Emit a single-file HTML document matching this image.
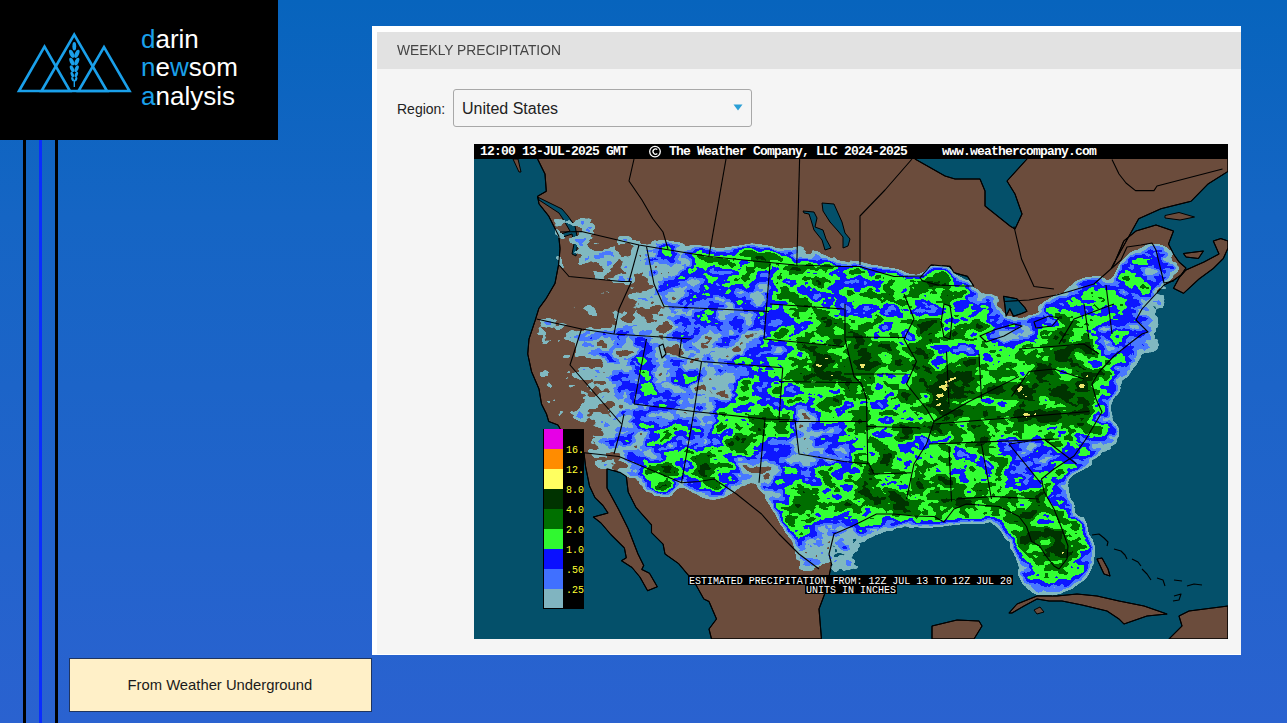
<!DOCTYPE html>
<html><head><meta charset="utf-8">
<style>
html,body{margin:0;padding:0;}
body{width:1287px;height:723px;position:relative;overflow:hidden;
background:linear-gradient(180deg,#0764bd 0%,#1565c4 30%,#2a62d0 100%);
font-family:"Liberation Sans",sans-serif;}
.abs{position:absolute;}
#logo{left:0;top:0;width:278px;height:140px;background:#000;}
.vl{position:absolute;top:140px;bottom:0;width:3px;}
#panel{left:372px;top:26px;width:869px;height:629px;background:#fff;}
#hdr{left:377px;top:32px;width:864px;height:37px;background:#e2e2e2;}
#body{left:377px;top:69px;width:864px;height:585px;background:#f5f5f5;}
#title{left:397px;top:41.4px;font-size:15px;color:#444;white-space:nowrap;transform:scaleX(0.92);transform-origin:0 0;}
#reglbl{left:397px;top:101.2px;font-size:14px;color:#222;}
#sel{left:453px;top:89px;width:297px;height:36px;border:1px solid #a8a8a8;border-radius:3px;background:#f5f5f5;}
#seltxt{left:462px;top:99.5px;font-size:16px;color:#222;}
#map{left:474px;top:144px;width:754px;height:495px;}
#note{left:69px;top:658px;width:301px;height:52px;background:#fff0c8;border:1px solid #203560;}
#notetxt{left:127.5px;top:676.6px;font-size:14.8px;color:#1a1a1a;}
.logotxt{position:absolute;left:141px;font-size:26px;color:#fff;line-height:28px;letter-spacing:0px;}
.logotxt b{font-weight:normal;color:#1aa0ea;}
</style></head><body>
<div id="logo" class="abs">
<svg width="278" height="140" viewBox="0 0 278 140">
 <g fill="none" stroke="#1aa0ea" stroke-width="2.6" stroke-linejoin="miter">
  <path d="M19 91 L44.5 46.5 L70 91 Z"/>
  <path d="M41.5 91 L74.2 34.5 L107 91 Z"/>
  <path d="M78.5 91 L104 47 L129.5 91 Z"/>
 </g>
 <g fill="#1aa0ea">
  <ellipse cx="74.3" cy="46.3" rx="1.9" ry="4.3"/>
  <ellipse cx="71.70" cy="53.8" rx="2.1" ry="4.3" transform="rotate(-24 71.70 53.8)"/>
  <ellipse cx="76.90" cy="53.8" rx="2.1" ry="4.3" transform="rotate(24 76.90 53.8)"/>
  <ellipse cx="71.80" cy="61.6" rx="2.0" ry="4.1" transform="rotate(-24 71.80 61.6)"/>
  <ellipse cx="76.80" cy="61.6" rx="2.0" ry="4.1" transform="rotate(24 76.80 61.6)"/>
  <ellipse cx="72.00" cy="68.7" rx="1.8" ry="3.6" transform="rotate(-24 72.00 68.7)"/>
  <ellipse cx="76.60" cy="68.7" rx="1.8" ry="3.6" transform="rotate(24 76.60 68.7)"/>
  <ellipse cx="72.30" cy="74.6" rx="1.5" ry="3.0" transform="rotate(-24 72.30 74.6)"/>
  <ellipse cx="76.30" cy="74.6" rx="1.5" ry="3.0" transform="rotate(24 76.30 74.6)"/>
  <ellipse cx="72.60" cy="79.2" rx="1.2" ry="2.3" transform="rotate(-24 72.60 79.2)"/>
  <ellipse cx="76.00" cy="79.2" rx="1.2" ry="2.3" transform="rotate(24 76.00 79.2)"/>
  <rect x="73.6" y="80" width="1.4" height="7"/>
 </g>
</svg>
<div class="logotxt" style="top:24.5px"><b>d</b>arin</div>
<div class="logotxt" style="top:53px"><b>n</b>e<b>w</b>som</div>
<div class="logotxt" style="top:81.5px"><b>a</b>nalysis</div>
</div>
<div class="vl" style="left:23px;background:#000"></div>
<div class="vl" style="left:39px;background:#0a2cff"></div>
<div class="vl" style="left:55px;background:#000"></div>
<div id="panel" class="abs"></div>
<div id="hdr" class="abs"></div>
<div id="body" class="abs"></div>
<div id="title" class="abs">WEEKLY PRECIPITATION</div>
<div id="reglbl" class="abs">Region:</div>
<div id="sel" class="abs"></div>
<div id="seltxt" class="abs">United States</div>
<svg class="abs" style="left:733px;top:104px" width="11" height="8"><path d="M0.5 0.5 L9.5 0.5 L5 6.5 Z" fill="#2a9fd6"/></svg>
<svg id="map" class="abs" width="754" height="495" viewBox="0 0 754 495">
<rect x="0" y="0" width="754" height="495" fill="#04506a"/>
<path d="M62,0 L63.6,15 L71,30 L72.3,47.3 L63.6,52.3 L65,59.8 L74.8,72.2 L79.8,82.2 L84.8,92.1 L86,104.6 L84.8,119.5 L81,139.4 L72.3,154.3 L64.9,164.3 L61.1,176.7 L55,195 L53.75,210 L57.5,227.5 L65,245 L67.5,260 L72.5,270 L74.7,277.4 L84,281 L95,300 L110,309 L111.6,322.7 L115.5,342 L121,353.7 L129,361.5 L134,369 L119.4,373 L127,379 L136.8,390.5 L150.4,404 L152.3,413.8 L147.5,416.7 L158,423.5 L165.9,433 L173.6,446.7 L183.3,442.8 L175.5,429.3 L167.8,425.4 L169.7,421.5 L164,410 L154.2,384.7 L144.6,365.4 L133,344 L133,324.7 L146.5,328.6 L152.3,332.4 L154.2,348 L162,363.4 L177.5,380.9 L177.5,388.6 L189.1,400.2 L191,410 L204.6,419.6 L214.3,431.2 L222,441 L229.8,455 L235,457.5 L242.5,475 L235,485 L237.5,495 L347.5,495 L345,465 L352.5,445 L357.5,420 L355,410 L360,390 L377.5,382.5 L402.5,370 L420,370 L440,372 L460,372.5 L470,378 L480,365 L492.5,360 L525,362.5 L545,372.5 L552.5,382.5 L557.5,397.5 L565.5,402 L572,412 L580,422 L585,425 L593,415 L594,402 L588,385 L580,365 L570,347.5 L567.5,335 L580,325 L600,312 L612,295 L628,268 L622,255 L618,240 L625,228 L640,212 L655,200 L668,190 L674,188 L668,182 L662,176 L668,165 L680,152 L690,141 L700,136 L707,131 L712,124 L705,118 L699.5,110 L694.5,100 L699.5,87 L682,81 L662,87 L649.8,97 L640,120 L637.3,124.5 L639.8,119.5 L664.7,74.7 L687,64.7 L717,57.3 L734,40 L754,27.4 L754,0 L553,0 L553,15 L533,37 L541,50 L548,70 L541,85 L536,82 L521,70 L511,62 L511,47 L506,35 L481,35 L471,32 L441,15 L441,0 Z" fill="#6b4c3c" stroke="#000" stroke-width="1"/>
<path d="M699.5,144.3 L709.5,149.3 L725,135 L739.3,124.5 L749.3,114.5 L754,104 L754,97 L746.8,94.6 L739.3,97 L745,110 L730,118 L712,126 L705,134 Z" fill="#6b4c3c" stroke="#000" stroke-width="1"/>
<path d="M709.5,109.5 L729.4,107 L724.4,114.5 L712,113 Z" fill="#6b4c3c" stroke="#000" stroke-width="1"/>
<path d="M691,71.5 L705,68.5 L720.5,73 L706,76 L691,74 Z" fill="#6b4c3c" stroke="#000" stroke-width="1"/>
<path d="M535,469 L543,460 L563,452 L583,452 L603,450 L623,452 L645,457 L670,462 L693,470 L673,472 L650,480 L645,475 L633,467 L608,461 L588,457 L575,457 L563,455 L550,462 L538,469 Z" fill="#6b4c3c" stroke="#000" stroke-width="1"/>
<path d="M560,466 L566,463 L570,468 L563,470 Z" fill="#6b4c3c" stroke="#000" stroke-width="1"/>
<path d="M705,472 L715,467 L754,462 L754,495 L695,495 L708,482 Z" fill="#6b4c3c" stroke="#000" stroke-width="1"/>
<path d="M458,495 L458,482 L483,476 L505,477 L508,482 L500,495 Z" fill="#6b4c3c" stroke="#000" stroke-width="1"/>
<path d="M623,415 L628,414 L634,425 L636,432 L630,430 Z" fill="#6b4c3c" stroke="#000" stroke-width="1"/>
<path d="M39,15 L44,15 L47,28 L45,28 Z" fill="#6b4c3c" stroke="#000" stroke-width="1"/>
<path d="M63.6,53 L88,65 L94,72 L101,82 L104,97 L102,112 L98,110 L100,100 L98,90 L86,94 L84,91 L96,87 L89,75 L85,69 L65,56 Z" fill="#04506a" stroke="#000" stroke-width="1"/>
<path d="M348,59 L360,60 L368,78 L371,89 L376,95 L374,102 L369,104 L369,93 L364,87 L356,78 L349,67 Z" fill="#04506a" stroke="#000" stroke-width="1"/>
<path d="M329,67 L340,68 L343,74 L341,83 L349,86 L352,95 L357,104 L351,106 L348,96 L340,86 L337,76 L335,70 L330,69 Z" fill="#04506a" stroke="#000" stroke-width="1"/>
<path d="M446,133.6 L457,121 L476,122.4 L480,128.7 L493.5,132.4 L499.7,142 L488,142 L463.6,141 L448.6,137 Z" fill="#04506a" stroke="#000" stroke-width="1"/>
<path d="M470,160 L476,162 L478,175 L476,195 L470,193 L467,178 Z" fill="#04506a" stroke="#000" stroke-width="1"/>
<path d="M529.6,152.3 L543,154.8 L550.8,163.5 L553,167.3 L547,169.8 L539.5,172.2 L535.8,164.8 L532,172.2 L530.8,161 Z" fill="#04506a" stroke="#000" stroke-width="1"/>
<path d="M506,192 L520,186 L540,180 L548,182 L530,192 L512,198 Z" fill="#04506a" stroke="#000" stroke-width="1"/>
<path d="M560,178 L575,172 L585,174 L578,182 L562,184 Z" fill="#04506a" stroke="#000" stroke-width="1"/>
<defs>
<filter id="pf" x="0" y="0" width="754" height="495" filterUnits="userSpaceOnUse" color-interpolation-filters="sRGB">
  <feColorMatrix in="SourceGraphic" type="matrix" values="1 0 0 0 0  1 0 0 0 0  1 0 0 0 0  0 0 0 0 1" result="r0"/>
  <feGaussianBlur in="r0" stdDeviation="7" result="base0"/>
  <feColorMatrix in="SourceGraphic" type="matrix" values="0 1 0 0 0  0 1 0 0 0  0 1 0 0 0  0 0 0 0 1" result="g0"/>
  <feGaussianBlur in="g0" stdDeviation="5" result="env1"/>
  <feComponentTransfer in="env1" result="env"><feFuncR type="linear" slope="1.55" intercept="-0.55"/><feFuncG type="linear" slope="1.55" intercept="-0.55"/><feFuncB type="linear" slope="1.55" intercept="-0.55"/></feComponentTransfer>
  <feComposite in="base0" in2="env" operator="arithmetic" k1="1" k2="0" k3="0" k4="0" result="base"/>
  <feTurbulence type="fractalNoise" baseFrequency="0.05 0.075" numOctaves="3" seed="7" result="noise"/>
  <feColorMatrix in="noise" type="matrix" values="1 0 0 0 0  1 0 0 0 0  1 0 0 0 0  0 0 0 0 1" result="gn0"/>
  <feComposite in="gn0" in2="env" operator="arithmetic" k1="1" k2="0" k3="-0.5" k4="0.5" result="gn"/>
  <feComposite in="base" in2="gn" operator="arithmetic" k1="0" k2="1" k3="0.8" k4="-0.4" result="sum"/>
  <feComponentTransfer in="sum" result="col">
    <feFuncR type="discrete" tableValues="0.000 0.000 0.000 0.000 0.000 0.502 0.502 0.502 0.502 0.502 0.502 0.290 0.290 0.290 0.290 0.051 0.051 0.051 0.051 0.051 0.200 0.200 0.200 0.200 0.200 0.000 0.000 0.000 0.000 0.000 0.000 0.000 0.000 0.000 0.000 0.000 0.000 0.000 0.941 0.941"/>
    <feFuncG type="discrete" tableValues="0.000 0.000 0.000 0.000 0.000 0.722 0.722 0.722 0.722 0.722 0.722 0.471 0.471 0.471 0.471 0.094 0.094 0.094 0.094 0.094 1.000 1.000 1.000 1.000 1.000 0.435 0.435 0.435 0.435 0.435 0.435 0.200 0.200 0.200 0.200 0.200 0.200 0.200 0.902 0.902"/>
    <feFuncB type="discrete" tableValues="0.000 0.000 0.000 0.000 0.000 0.753 0.753 0.753 0.753 0.753 0.753 1.000 1.000 1.000 1.000 1.000 1.000 1.000 1.000 1.000 0.200 0.200 0.200 0.200 0.200 0.000 0.000 0.000 0.000 0.000 0.000 0.000 0.000 0.000 0.000 0.000 0.000 0.000 0.431 0.431"/>
  </feComponentTransfer>
  <feColorMatrix in="sum" type="matrix" values="0 0 0 0 0  0 0 0 0 0  0 0 0 0 0  100 0 0 0 -12.5" result="mask"/>
  <feComposite in="col" in2="mask" operator="in"/>
</filter>
</defs>
<g filter="url(#pf)">
<rect x="0" y="0" width="754" height="495" fill="#000"/>
<rect x="60" y="35" width="20" height="20" fill="rgb(13,0,0)"/><rect x="80" y="35" width="20" height="20" fill="rgb(46,0,0)"/><rect x="100" y="35" width="20" height="20" fill="rgb(46,0,0)"/><rect x="120" y="35" width="20" height="20" fill="rgb(46,0,0)"/><rect x="60" y="55" width="20" height="20" fill="rgb(46,0,0)"/><rect x="80" y="55" width="20" height="20" fill="rgb(13,0,0)"/><rect x="100" y="55" width="20" height="20" fill="rgb(46,0,0)"/><rect x="120" y="55" width="20" height="20" fill="rgb(46,0,0)"/><rect x="140" y="55" width="20" height="20" fill="rgb(46,0,0)"/><rect x="160" y="55" width="20" height="20" fill="rgb(46,0,0)"/><rect x="180" y="55" width="20" height="20" fill="rgb(46,0,0)"/><rect x="60" y="75" width="20" height="20" fill="rgb(13,0,0)"/><rect x="80" y="75" width="20" height="20" fill="rgb(46,0,0)"/><rect x="100" y="75" width="20" height="20" fill="rgb(46,0,0)"/><rect x="120" y="75" width="20" height="20" fill="rgb(13,0,0)"/><rect x="140" y="75" width="20" height="20" fill="rgb(46,0,0)"/><rect x="160" y="75" width="20" height="20" fill="rgb(46,0,0)"/><rect x="180" y="75" width="20" height="20" fill="rgb(71,0,0)"/><rect x="200" y="75" width="20" height="20" fill="rgb(102,0,0)"/><rect x="220" y="75" width="20" height="20" fill="rgb(102,0,0)"/><rect x="240" y="75" width="20" height="20" fill="rgb(133,0,0)"/><rect x="260" y="75" width="20" height="20" fill="rgb(166,0,0)"/><rect x="280" y="75" width="20" height="20" fill="rgb(166,0,0)"/><rect x="300" y="75" width="20" height="20" fill="rgb(133,0,0)"/><rect x="320" y="75" width="20" height="20" fill="rgb(71,0,0)"/><rect x="340" y="75" width="20" height="20" fill="rgb(46,0,0)"/><rect x="360" y="75" width="20" height="20" fill="rgb(46,0,0)"/><rect x="380" y="75" width="20" height="20" fill="rgb(13,0,0)"/><rect x="620" y="75" width="20" height="20" fill="rgb(46,0,0)"/><rect x="640" y="75" width="20" height="20" fill="rgb(102,0,0)"/><rect x="660" y="75" width="20" height="20" fill="rgb(71,0,0)"/><rect x="680" y="75" width="20" height="20" fill="rgb(102,0,0)"/><rect x="700" y="75" width="20" height="20" fill="rgb(71,0,0)"/><rect x="60" y="95" width="20" height="20" fill="rgb(46,0,0)"/><rect x="80" y="95" width="20" height="20" fill="rgb(13,0,0)"/><rect x="100" y="95" width="20" height="20" fill="rgb(13,0,0)"/><rect x="120" y="95" width="20" height="20" fill="rgb(46,0,0)"/><rect x="140" y="95" width="20" height="20" fill="rgb(46,0,0)"/><rect x="160" y="95" width="20" height="20" fill="rgb(46,0,0)"/><rect x="180" y="95" width="20" height="20" fill="rgb(102,0,0)"/><rect x="200" y="95" width="20" height="20" fill="rgb(102,0,0)"/><rect x="220" y="95" width="20" height="20" fill="rgb(102,0,0)"/><rect x="240" y="95" width="20" height="20" fill="rgb(133,0,0)"/><rect x="260" y="95" width="20" height="20" fill="rgb(166,0,0)"/><rect x="280" y="95" width="20" height="20" fill="rgb(166,0,0)"/><rect x="300" y="95" width="20" height="20" fill="rgb(133,0,0)"/><rect x="320" y="95" width="20" height="20" fill="rgb(71,0,0)"/><rect x="340" y="95" width="20" height="20" fill="rgb(46,0,0)"/><rect x="360" y="95" width="20" height="20" fill="rgb(13,0,0)"/><rect x="380" y="95" width="20" height="20" fill="rgb(102,0,0)"/><rect x="400" y="95" width="20" height="20" fill="rgb(133,0,0)"/><rect x="420" y="95" width="20" height="20" fill="rgb(166,0,0)"/><rect x="440" y="95" width="20" height="20" fill="rgb(166,0,0)"/><rect x="460" y="95" width="20" height="20" fill="rgb(102,0,0)"/><rect x="480" y="95" width="20" height="20" fill="rgb(102,0,0)"/><rect x="500" y="95" width="20" height="20" fill="rgb(13,0,0)"/><rect x="620" y="95" width="20" height="20" fill="rgb(102,0,0)"/><rect x="640" y="95" width="20" height="20" fill="rgb(46,0,0)"/><rect x="660" y="95" width="20" height="20" fill="rgb(133,0,0)"/><rect x="680" y="95" width="20" height="20" fill="rgb(71,0,0)"/><rect x="700" y="95" width="20" height="20" fill="rgb(71,0,0)"/><rect x="720" y="95" width="20" height="20" fill="rgb(46,0,0)"/><rect x="60" y="115" width="20" height="20" fill="rgb(13,0,0)"/><rect x="100" y="115" width="20" height="20" fill="rgb(13,0,0)"/><rect x="120" y="115" width="20" height="20" fill="rgb(46,0,0)"/><rect x="140" y="115" width="20" height="20" fill="rgb(46,0,0)"/><rect x="160" y="115" width="20" height="20" fill="rgb(71,0,0)"/><rect x="180" y="115" width="20" height="20" fill="rgb(71,0,0)"/><rect x="200" y="115" width="20" height="20" fill="rgb(102,0,0)"/><rect x="220" y="115" width="20" height="20" fill="rgb(133,0,0)"/><rect x="240" y="115" width="20" height="20" fill="rgb(166,0,0)"/><rect x="260" y="115" width="20" height="20" fill="rgb(166,0,0)"/><rect x="280" y="115" width="20" height="20" fill="rgb(133,0,0)"/><rect x="300" y="115" width="20" height="20" fill="rgb(166,0,0)"/><rect x="320" y="115" width="20" height="20" fill="rgb(166,0,0)"/><rect x="340" y="115" width="20" height="20" fill="rgb(166,0,0)"/><rect x="360" y="115" width="20" height="20" fill="rgb(133,0,0)"/><rect x="380" y="115" width="20" height="20" fill="rgb(133,0,0)"/><rect x="400" y="115" width="20" height="20" fill="rgb(133,0,0)"/><rect x="420" y="115" width="20" height="20" fill="rgb(166,0,0)"/><rect x="440" y="115" width="20" height="20" fill="rgb(166,0,0)"/><rect x="460" y="115" width="20" height="20" fill="rgb(166,0,0)"/><rect x="480" y="115" width="20" height="20" fill="rgb(13,0,0)"/><rect x="500" y="115" width="20" height="20" fill="rgb(46,0,0)"/><rect x="520" y="115" width="20" height="20" fill="rgb(46,0,0)"/><rect x="540" y="115" width="20" height="20" fill="rgb(13,0,0)"/><rect x="580" y="115" width="20" height="20" fill="rgb(133,0,0)"/><rect x="600" y="115" width="20" height="20" fill="rgb(133,0,0)"/><rect x="620" y="115" width="20" height="20" fill="rgb(133,0,0)"/><rect x="640" y="115" width="20" height="20" fill="rgb(166,0,0)"/><rect x="660" y="115" width="20" height="20" fill="rgb(133,0,0)"/><rect x="680" y="115" width="20" height="20" fill="rgb(71,0,0)"/><rect x="700" y="115" width="20" height="20" fill="rgb(46,0,0)"/><rect x="720" y="115" width="20" height="20" fill="rgb(46,0,0)"/><rect x="140" y="135" width="20" height="20" fill="rgb(13,0,0)"/><rect x="160" y="135" width="20" height="20" fill="rgb(46,0,0)"/><rect x="180" y="135" width="20" height="20" fill="rgb(71,0,0)"/><rect x="200" y="135" width="20" height="20" fill="rgb(71,0,0)"/><rect x="220" y="135" width="20" height="20" fill="rgb(102,0,0)"/><rect x="240" y="135" width="20" height="20" fill="rgb(102,0,0)"/><rect x="260" y="135" width="20" height="20" fill="rgb(102,0,0)"/><rect x="280" y="135" width="20" height="20" fill="rgb(102,0,0)"/><rect x="300" y="135" width="20" height="20" fill="rgb(133,0,0)"/><rect x="320" y="135" width="20" height="20" fill="rgb(133,0,0)"/><rect x="340" y="135" width="20" height="20" fill="rgb(102,0,0)"/><rect x="360" y="135" width="20" height="20" fill="rgb(133,0,0)"/><rect x="380" y="135" width="20" height="20" fill="rgb(133,0,0)"/><rect x="400" y="135" width="20" height="20" fill="rgb(166,0,0)"/><rect x="420" y="135" width="20" height="20" fill="rgb(166,0,0)"/><rect x="440" y="135" width="20" height="20" fill="rgb(166,0,0)"/><rect x="460" y="135" width="20" height="20" fill="rgb(166,0,0)"/><rect x="480" y="135" width="20" height="20" fill="rgb(133,0,0)"/><rect x="500" y="135" width="20" height="20" fill="rgb(46,0,0)"/><rect x="520" y="135" width="20" height="20" fill="rgb(13,0,0)"/><rect x="540" y="135" width="20" height="20" fill="rgb(46,0,0)"/><rect x="560" y="135" width="20" height="20" fill="rgb(102,0,0)"/><rect x="600" y="135" width="20" height="20" fill="rgb(133,0,0)"/><rect x="620" y="135" width="20" height="20" fill="rgb(133,0,0)"/><rect x="640" y="135" width="20" height="20" fill="rgb(133,0,0)"/><rect x="660" y="135" width="20" height="20" fill="rgb(102,0,0)"/><rect x="680" y="135" width="20" height="20" fill="rgb(46,0,0)"/><rect x="700" y="135" width="20" height="20" fill="rgb(13,0,0)"/><rect x="720" y="135" width="20" height="20" fill="rgb(46,0,0)"/><rect x="160" y="155" width="20" height="20" fill="rgb(13,0,0)"/><rect x="180" y="155" width="20" height="20" fill="rgb(46,0,0)"/><rect x="200" y="155" width="20" height="20" fill="rgb(102,0,0)"/><rect x="220" y="155" width="20" height="20" fill="rgb(102,0,0)"/><rect x="240" y="155" width="20" height="20" fill="rgb(102,0,0)"/><rect x="260" y="155" width="20" height="20" fill="rgb(71,0,0)"/><rect x="280" y="155" width="20" height="20" fill="rgb(71,0,0)"/><rect x="300" y="155" width="20" height="20" fill="rgb(166,0,0)"/><rect x="320" y="155" width="20" height="20" fill="rgb(166,0,0)"/><rect x="340" y="155" width="20" height="20" fill="rgb(133,0,0)"/><rect x="360" y="155" width="20" height="20" fill="rgb(133,0,0)"/><rect x="380" y="155" width="20" height="20" fill="rgb(133,0,0)"/><rect x="400" y="155" width="20" height="20" fill="rgb(133,0,0)"/><rect x="420" y="155" width="20" height="20" fill="rgb(133,0,0)"/><rect x="440" y="155" width="20" height="20" fill="rgb(133,0,0)"/><rect x="460" y="155" width="20" height="20" fill="rgb(102,0,0)"/><rect x="480" y="155" width="20" height="20" fill="rgb(133,0,0)"/><rect x="500" y="155" width="20" height="20" fill="rgb(102,0,0)"/><rect x="520" y="155" width="20" height="20" fill="rgb(71,0,0)"/><rect x="540" y="155" width="20" height="20" fill="rgb(46,0,0)"/><rect x="560" y="155" width="20" height="20" fill="rgb(102,0,0)"/><rect x="580" y="155" width="20" height="20" fill="rgb(166,0,0)"/><rect x="600" y="155" width="20" height="20" fill="rgb(166,0,0)"/><rect x="620" y="155" width="20" height="20" fill="rgb(133,0,0)"/><rect x="640" y="155" width="20" height="20" fill="rgb(133,0,0)"/><rect x="660" y="155" width="20" height="20" fill="rgb(71,0,0)"/><rect x="680" y="155" width="20" height="20" fill="rgb(46,0,0)"/><rect x="700" y="155" width="20" height="20" fill="rgb(46,0,0)"/><rect x="720" y="155" width="20" height="20" fill="rgb(13,0,0)"/><rect x="80" y="175" width="20" height="20" fill="rgb(13,0,0)"/><rect x="100" y="175" width="20" height="20" fill="rgb(46,0,0)"/><rect x="120" y="175" width="20" height="20" fill="rgb(71,0,0)"/><rect x="140" y="175" width="20" height="20" fill="rgb(71,0,0)"/><rect x="160" y="175" width="20" height="20" fill="rgb(71,0,0)"/><rect x="180" y="175" width="20" height="20" fill="rgb(46,0,0)"/><rect x="200" y="175" width="20" height="20" fill="rgb(102,0,0)"/><rect x="220" y="175" width="20" height="20" fill="rgb(71,0,0)"/><rect x="240" y="175" width="20" height="20" fill="rgb(102,0,0)"/><rect x="260" y="175" width="20" height="20" fill="rgb(71,0,0)"/><rect x="280" y="175" width="20" height="20" fill="rgb(102,0,0)"/><rect x="300" y="175" width="20" height="20" fill="rgb(133,0,0)"/><rect x="320" y="175" width="20" height="20" fill="rgb(133,0,0)"/><rect x="340" y="175" width="20" height="20" fill="rgb(166,0,0)"/><rect x="360" y="175" width="20" height="20" fill="rgb(166,0,0)"/><rect x="380" y="175" width="20" height="20" fill="rgb(166,0,0)"/><rect x="400" y="175" width="20" height="20" fill="rgb(133,0,0)"/><rect x="420" y="175" width="20" height="20" fill="rgb(133,0,0)"/><rect x="440" y="175" width="20" height="20" fill="rgb(166,0,0)"/><rect x="460" y="175" width="20" height="20" fill="rgb(194,0,0)"/><rect x="480" y="175" width="20" height="20" fill="rgb(166,0,0)"/><rect x="500" y="175" width="20" height="20" fill="rgb(133,0,0)"/><rect x="520" y="175" width="20" height="20" fill="rgb(102,0,0)"/><rect x="540" y="175" width="20" height="20" fill="rgb(71,0,0)"/><rect x="560" y="175" width="20" height="20" fill="rgb(133,0,0)"/><rect x="580" y="175" width="20" height="20" fill="rgb(166,0,0)"/><rect x="600" y="175" width="20" height="20" fill="rgb(133,0,0)"/><rect x="620" y="175" width="20" height="20" fill="rgb(102,0,0)"/><rect x="640" y="175" width="20" height="20" fill="rgb(102,0,0)"/><rect x="660" y="175" width="20" height="20" fill="rgb(71,0,0)"/><rect x="680" y="175" width="20" height="20" fill="rgb(46,0,0)"/><rect x="700" y="175" width="20" height="20" fill="rgb(46,0,0)"/><rect x="100" y="195" width="20" height="20" fill="rgb(46,0,0)"/><rect x="120" y="195" width="20" height="20" fill="rgb(71,0,0)"/><rect x="140" y="195" width="20" height="20" fill="rgb(71,0,0)"/><rect x="160" y="195" width="20" height="20" fill="rgb(102,0,0)"/><rect x="180" y="195" width="20" height="20" fill="rgb(46,0,0)"/><rect x="200" y="195" width="20" height="20" fill="rgb(46,0,0)"/><rect x="220" y="195" width="20" height="20" fill="rgb(71,0,0)"/><rect x="240" y="195" width="20" height="20" fill="rgb(71,0,0)"/><rect x="260" y="195" width="20" height="20" fill="rgb(71,0,0)"/><rect x="280" y="195" width="20" height="20" fill="rgb(102,0,0)"/><rect x="300" y="195" width="20" height="20" fill="rgb(133,0,0)"/><rect x="320" y="195" width="20" height="20" fill="rgb(166,0,0)"/><rect x="340" y="195" width="20" height="20" fill="rgb(194,0,0)"/><rect x="360" y="195" width="20" height="20" fill="rgb(194,0,0)"/><rect x="380" y="195" width="20" height="20" fill="rgb(166,0,0)"/><rect x="400" y="195" width="20" height="20" fill="rgb(194,0,0)"/><rect x="420" y="195" width="20" height="20" fill="rgb(166,0,0)"/><rect x="440" y="195" width="20" height="20" fill="rgb(166,0,0)"/><rect x="460" y="195" width="20" height="20" fill="rgb(133,0,0)"/><rect x="480" y="195" width="20" height="20" fill="rgb(133,0,0)"/><rect x="500" y="195" width="20" height="20" fill="rgb(133,0,0)"/><rect x="520" y="195" width="20" height="20" fill="rgb(133,0,0)"/><rect x="540" y="195" width="20" height="20" fill="rgb(133,0,0)"/><rect x="560" y="195" width="20" height="20" fill="rgb(194,0,0)"/><rect x="580" y="195" width="20" height="20" fill="rgb(166,0,0)"/><rect x="600" y="195" width="20" height="20" fill="rgb(194,0,0)"/><rect x="620" y="195" width="20" height="20" fill="rgb(133,0,0)"/><rect x="640" y="195" width="20" height="20" fill="rgb(102,0,0)"/><rect x="660" y="195" width="20" height="20" fill="rgb(71,0,0)"/><rect x="680" y="195" width="20" height="20" fill="rgb(13,0,0)"/><rect x="700" y="195" width="20" height="20" fill="rgb(46,0,0)"/><rect x="100" y="215" width="20" height="20" fill="rgb(46,0,0)"/><rect x="120" y="215" width="20" height="20" fill="rgb(71,0,0)"/><rect x="140" y="215" width="20" height="20" fill="rgb(71,0,0)"/><rect x="160" y="215" width="20" height="20" fill="rgb(102,0,0)"/><rect x="180" y="215" width="20" height="20" fill="rgb(71,0,0)"/><rect x="200" y="215" width="20" height="20" fill="rgb(102,0,0)"/><rect x="220" y="215" width="20" height="20" fill="rgb(71,0,0)"/><rect x="240" y="215" width="20" height="20" fill="rgb(46,0,0)"/><rect x="260" y="215" width="20" height="20" fill="rgb(133,0,0)"/><rect x="280" y="215" width="20" height="20" fill="rgb(133,0,0)"/><rect x="300" y="215" width="20" height="20" fill="rgb(133,0,0)"/><rect x="320" y="215" width="20" height="20" fill="rgb(194,0,0)"/><rect x="340" y="215" width="20" height="20" fill="rgb(194,0,0)"/><rect x="360" y="215" width="20" height="20" fill="rgb(166,0,0)"/><rect x="380" y="215" width="20" height="20" fill="rgb(194,0,0)"/><rect x="400" y="215" width="20" height="20" fill="rgb(166,0,0)"/><rect x="420" y="215" width="20" height="20" fill="rgb(166,0,0)"/><rect x="440" y="215" width="20" height="20" fill="rgb(166,0,0)"/><rect x="460" y="215" width="20" height="20" fill="rgb(166,0,0)"/><rect x="480" y="215" width="20" height="20" fill="rgb(194,0,0)"/><rect x="500" y="215" width="20" height="20" fill="rgb(166,0,0)"/><rect x="520" y="215" width="20" height="20" fill="rgb(166,0,0)"/><rect x="540" y="215" width="20" height="20" fill="rgb(166,0,0)"/><rect x="560" y="215" width="20" height="20" fill="rgb(194,0,0)"/><rect x="580" y="215" width="20" height="20" fill="rgb(166,0,0)"/><rect x="600" y="215" width="20" height="20" fill="rgb(194,0,0)"/><rect x="620" y="215" width="20" height="20" fill="rgb(133,0,0)"/><rect x="640" y="215" width="20" height="20" fill="rgb(102,0,0)"/><rect x="660" y="215" width="20" height="20" fill="rgb(46,0,0)"/><rect x="680" y="215" width="20" height="20" fill="rgb(46,0,0)"/><rect x="700" y="215" width="20" height="20" fill="rgb(13,0,0)"/><rect x="100" y="235" width="20" height="20" fill="rgb(13,0,0)"/><rect x="120" y="235" width="20" height="20" fill="rgb(46,0,0)"/><rect x="140" y="235" width="20" height="20" fill="rgb(102,0,0)"/><rect x="160" y="235" width="20" height="20" fill="rgb(102,0,0)"/><rect x="180" y="235" width="20" height="20" fill="rgb(102,0,0)"/><rect x="200" y="235" width="20" height="20" fill="rgb(102,0,0)"/><rect x="220" y="235" width="20" height="20" fill="rgb(71,0,0)"/><rect x="240" y="235" width="20" height="20" fill="rgb(46,0,0)"/><rect x="260" y="235" width="20" height="20" fill="rgb(133,0,0)"/><rect x="280" y="235" width="20" height="20" fill="rgb(133,0,0)"/><rect x="300" y="235" width="20" height="20" fill="rgb(133,0,0)"/><rect x="320" y="235" width="20" height="20" fill="rgb(133,0,0)"/><rect x="340" y="235" width="20" height="20" fill="rgb(166,0,0)"/><rect x="360" y="235" width="20" height="20" fill="rgb(194,0,0)"/><rect x="380" y="235" width="20" height="20" fill="rgb(166,0,0)"/><rect x="400" y="235" width="20" height="20" fill="rgb(133,0,0)"/><rect x="420" y="235" width="20" height="20" fill="rgb(166,0,0)"/><rect x="440" y="235" width="20" height="20" fill="rgb(194,0,0)"/><rect x="460" y="235" width="20" height="20" fill="rgb(219,0,0)"/><rect x="480" y="235" width="20" height="20" fill="rgb(194,0,0)"/><rect x="500" y="235" width="20" height="20" fill="rgb(166,0,0)"/><rect x="520" y="235" width="20" height="20" fill="rgb(166,0,0)"/><rect x="540" y="235" width="20" height="20" fill="rgb(194,0,0)"/><rect x="560" y="235" width="20" height="20" fill="rgb(194,0,0)"/><rect x="580" y="235" width="20" height="20" fill="rgb(194,0,0)"/><rect x="600" y="235" width="20" height="20" fill="rgb(194,0,0)"/><rect x="620" y="235" width="20" height="20" fill="rgb(133,0,0)"/><rect x="640" y="235" width="20" height="20" fill="rgb(71,0,0)"/><rect x="660" y="235" width="20" height="20" fill="rgb(71,0,0)"/><rect x="680" y="235" width="20" height="20" fill="rgb(46,0,0)"/><rect x="100" y="255" width="20" height="20" fill="rgb(13,0,0)"/><rect x="120" y="255" width="20" height="20" fill="rgb(46,0,0)"/><rect x="140" y="255" width="20" height="20" fill="rgb(71,0,0)"/><rect x="160" y="255" width="20" height="20" fill="rgb(102,0,0)"/><rect x="180" y="255" width="20" height="20" fill="rgb(102,0,0)"/><rect x="200" y="255" width="20" height="20" fill="rgb(46,0,0)"/><rect x="220" y="255" width="20" height="20" fill="rgb(71,0,0)"/><rect x="240" y="255" width="20" height="20" fill="rgb(102,0,0)"/><rect x="260" y="255" width="20" height="20" fill="rgb(133,0,0)"/><rect x="280" y="255" width="20" height="20" fill="rgb(133,0,0)"/><rect x="300" y="255" width="20" height="20" fill="rgb(133,0,0)"/><rect x="320" y="255" width="20" height="20" fill="rgb(102,0,0)"/><rect x="340" y="255" width="20" height="20" fill="rgb(133,0,0)"/><rect x="360" y="255" width="20" height="20" fill="rgb(166,0,0)"/><rect x="380" y="255" width="20" height="20" fill="rgb(166,0,0)"/><rect x="400" y="255" width="20" height="20" fill="rgb(133,0,0)"/><rect x="420" y="255" width="20" height="20" fill="rgb(166,0,0)"/><rect x="440" y="255" width="20" height="20" fill="rgb(166,0,0)"/><rect x="460" y="255" width="20" height="20" fill="rgb(219,0,0)"/><rect x="480" y="255" width="20" height="20" fill="rgb(194,0,0)"/><rect x="500" y="255" width="20" height="20" fill="rgb(194,0,0)"/><rect x="520" y="255" width="20" height="20" fill="rgb(166,0,0)"/><rect x="540" y="255" width="20" height="20" fill="rgb(194,0,0)"/><rect x="560" y="255" width="20" height="20" fill="rgb(194,0,0)"/><rect x="580" y="255" width="20" height="20" fill="rgb(194,0,0)"/><rect x="600" y="255" width="20" height="20" fill="rgb(194,0,0)"/><rect x="620" y="255" width="20" height="20" fill="rgb(133,0,0)"/><rect x="640" y="255" width="20" height="20" fill="rgb(71,0,0)"/><rect x="660" y="255" width="20" height="20" fill="rgb(71,0,0)"/><rect x="60" y="275" width="20" height="20" fill="rgb(46,0,0)"/><rect x="80" y="275" width="20" height="20" fill="rgb(46,0,0)"/><rect x="100" y="275" width="20" height="20" fill="rgb(13,0,0)"/><rect x="120" y="275" width="20" height="20" fill="rgb(46,0,0)"/><rect x="140" y="275" width="20" height="20" fill="rgb(71,0,0)"/><rect x="160" y="275" width="20" height="20" fill="rgb(102,0,0)"/><rect x="180" y="275" width="20" height="20" fill="rgb(133,0,0)"/><rect x="200" y="275" width="20" height="20" fill="rgb(133,0,0)"/><rect x="220" y="275" width="20" height="20" fill="rgb(46,0,0)"/><rect x="240" y="275" width="20" height="20" fill="rgb(133,0,0)"/><rect x="260" y="275" width="20" height="20" fill="rgb(194,0,0)"/><rect x="280" y="275" width="20" height="20" fill="rgb(166,0,0)"/><rect x="300" y="275" width="20" height="20" fill="rgb(133,0,0)"/><rect x="320" y="275" width="20" height="20" fill="rgb(71,0,0)"/><rect x="340" y="275" width="20" height="20" fill="rgb(102,0,0)"/><rect x="360" y="275" width="20" height="20" fill="rgb(133,0,0)"/><rect x="380" y="275" width="20" height="20" fill="rgb(166,0,0)"/><rect x="400" y="275" width="20" height="20" fill="rgb(133,0,0)"/><rect x="420" y="275" width="20" height="20" fill="rgb(166,0,0)"/><rect x="440" y="275" width="20" height="20" fill="rgb(166,0,0)"/><rect x="460" y="275" width="20" height="20" fill="rgb(166,0,0)"/><rect x="480" y="275" width="20" height="20" fill="rgb(166,0,0)"/><rect x="500" y="275" width="20" height="20" fill="rgb(166,0,0)"/><rect x="520" y="275" width="20" height="20" fill="rgb(166,0,0)"/><rect x="540" y="275" width="20" height="20" fill="rgb(133,0,0)"/><rect x="560" y="275" width="20" height="20" fill="rgb(194,0,0)"/><rect x="580" y="275" width="20" height="20" fill="rgb(166,0,0)"/><rect x="600" y="275" width="20" height="20" fill="rgb(166,0,0)"/><rect x="620" y="275" width="20" height="20" fill="rgb(133,0,0)"/><rect x="640" y="275" width="20" height="20" fill="rgb(71,0,0)"/><rect x="660" y="275" width="20" height="20" fill="rgb(71,0,0)"/><rect x="60" y="295" width="20" height="20" fill="rgb(46,0,0)"/><rect x="80" y="295" width="20" height="20" fill="rgb(46,0,0)"/><rect x="100" y="295" width="20" height="20" fill="rgb(46,0,0)"/><rect x="120" y="295" width="20" height="20" fill="rgb(46,0,0)"/><rect x="140" y="295" width="20" height="20" fill="rgb(71,0,0)"/><rect x="160" y="295" width="20" height="20" fill="rgb(71,0,0)"/><rect x="180" y="295" width="20" height="20" fill="rgb(102,0,0)"/><rect x="200" y="295" width="20" height="20" fill="rgb(133,0,0)"/><rect x="220" y="295" width="20" height="20" fill="rgb(133,0,0)"/><rect x="240" y="295" width="20" height="20" fill="rgb(166,0,0)"/><rect x="260" y="295" width="20" height="20" fill="rgb(166,0,0)"/><rect x="280" y="295" width="20" height="20" fill="rgb(102,0,0)"/><rect x="300" y="295" width="20" height="20" fill="rgb(102,0,0)"/><rect x="320" y="295" width="20" height="20" fill="rgb(46,0,0)"/><rect x="340" y="295" width="20" height="20" fill="rgb(71,0,0)"/><rect x="360" y="295" width="20" height="20" fill="rgb(102,0,0)"/><rect x="380" y="295" width="20" height="20" fill="rgb(133,0,0)"/><rect x="400" y="295" width="20" height="20" fill="rgb(166,0,0)"/><rect x="420" y="295" width="20" height="20" fill="rgb(133,0,0)"/><rect x="440" y="295" width="20" height="20" fill="rgb(133,0,0)"/><rect x="460" y="295" width="20" height="20" fill="rgb(133,0,0)"/><rect x="480" y="295" width="20" height="20" fill="rgb(133,0,0)"/><rect x="500" y="295" width="20" height="20" fill="rgb(166,0,0)"/><rect x="520" y="295" width="20" height="20" fill="rgb(133,0,0)"/><rect x="540" y="295" width="20" height="20" fill="rgb(71,0,0)"/><rect x="560" y="295" width="20" height="20" fill="rgb(102,0,0)"/><rect x="580" y="295" width="20" height="20" fill="rgb(133,0,0)"/><rect x="600" y="295" width="20" height="20" fill="rgb(102,0,0)"/><rect x="620" y="295" width="20" height="20" fill="rgb(71,0,0)"/><rect x="640" y="295" width="20" height="20" fill="rgb(46,0,0)"/><rect x="660" y="295" width="20" height="20" fill="rgb(46,0,0)"/><rect x="60" y="315" width="20" height="20" fill="rgb(46,0,0)"/><rect x="80" y="315" width="20" height="20" fill="rgb(46,0,0)"/><rect x="100" y="315" width="20" height="20" fill="rgb(13,0,0)"/><rect x="120" y="315" width="20" height="20" fill="rgb(13,0,0)"/><rect x="140" y="315" width="20" height="20" fill="rgb(46,0,0)"/><rect x="160" y="315" width="20" height="20" fill="rgb(133,0,0)"/><rect x="180" y="315" width="20" height="20" fill="rgb(166,0,0)"/><rect x="200" y="315" width="20" height="20" fill="rgb(133,0,0)"/><rect x="220" y="315" width="20" height="20" fill="rgb(166,0,0)"/><rect x="240" y="315" width="20" height="20" fill="rgb(166,0,0)"/><rect x="260" y="315" width="20" height="20" fill="rgb(71,0,0)"/><rect x="280" y="315" width="20" height="20" fill="rgb(46,0,0)"/><rect x="300" y="315" width="20" height="20" fill="rgb(102,0,0)"/><rect x="320" y="315" width="20" height="20" fill="rgb(71,0,0)"/><rect x="340" y="315" width="20" height="20" fill="rgb(102,0,0)"/><rect x="360" y="315" width="20" height="20" fill="rgb(133,0,0)"/><rect x="380" y="315" width="20" height="20" fill="rgb(166,0,0)"/><rect x="400" y="315" width="20" height="20" fill="rgb(166,0,0)"/><rect x="420" y="315" width="20" height="20" fill="rgb(133,0,0)"/><rect x="440" y="315" width="20" height="20" fill="rgb(166,0,0)"/><rect x="460" y="315" width="20" height="20" fill="rgb(166,0,0)"/><rect x="480" y="315" width="20" height="20" fill="rgb(133,0,0)"/><rect x="500" y="315" width="20" height="20" fill="rgb(133,0,0)"/><rect x="520" y="315" width="20" height="20" fill="rgb(133,0,0)"/><rect x="540" y="315" width="20" height="20" fill="rgb(71,0,0)"/><rect x="560" y="315" width="20" height="20" fill="rgb(133,0,0)"/><rect x="580" y="315" width="20" height="20" fill="rgb(133,0,0)"/><rect x="600" y="315" width="20" height="20" fill="rgb(102,0,0)"/><rect x="620" y="315" width="20" height="20" fill="rgb(13,0,0)"/><rect x="640" y="315" width="20" height="20" fill="rgb(46,0,0)"/><rect x="660" y="315" width="20" height="20" fill="rgb(46,0,0)"/><rect x="80" y="335" width="20" height="20" fill="rgb(13,0,0)"/><rect x="100" y="335" width="20" height="20" fill="rgb(13,0,0)"/><rect x="120" y="335" width="20" height="20" fill="rgb(13,0,0)"/><rect x="140" y="335" width="20" height="20" fill="rgb(46,0,0)"/><rect x="160" y="335" width="20" height="20" fill="rgb(46,0,0)"/><rect x="180" y="335" width="20" height="20" fill="rgb(194,0,0)"/><rect x="200" y="335" width="20" height="20" fill="rgb(102,0,0)"/><rect x="220" y="335" width="20" height="20" fill="rgb(166,0,0)"/><rect x="240" y="335" width="20" height="20" fill="rgb(133,0,0)"/><rect x="260" y="335" width="20" height="20" fill="rgb(46,0,0)"/><rect x="280" y="335" width="20" height="20" fill="rgb(46,0,0)"/><rect x="300" y="335" width="20" height="20" fill="rgb(133,0,0)"/><rect x="320" y="335" width="20" height="20" fill="rgb(166,0,0)"/><rect x="340" y="335" width="20" height="20" fill="rgb(166,0,0)"/><rect x="360" y="335" width="20" height="20" fill="rgb(133,0,0)"/><rect x="380" y="335" width="20" height="20" fill="rgb(166,0,0)"/><rect x="400" y="335" width="20" height="20" fill="rgb(194,0,0)"/><rect x="420" y="335" width="20" height="20" fill="rgb(166,0,0)"/><rect x="440" y="335" width="20" height="20" fill="rgb(166,0,0)"/><rect x="460" y="335" width="20" height="20" fill="rgb(166,0,0)"/><rect x="480" y="335" width="20" height="20" fill="rgb(166,0,0)"/><rect x="500" y="335" width="20" height="20" fill="rgb(166,0,0)"/><rect x="520" y="335" width="20" height="20" fill="rgb(133,0,0)"/><rect x="540" y="335" width="20" height="20" fill="rgb(166,0,0)"/><rect x="560" y="335" width="20" height="20" fill="rgb(133,0,0)"/><rect x="580" y="335" width="20" height="20" fill="rgb(102,0,0)"/><rect x="600" y="335" width="20" height="20" fill="rgb(71,0,0)"/><rect x="620" y="335" width="20" height="20" fill="rgb(46,0,0)"/><rect x="640" y="335" width="20" height="20" fill="rgb(13,0,0)"/><rect x="140" y="355" width="20" height="20" fill="rgb(46,0,0)"/><rect x="160" y="355" width="20" height="20" fill="rgb(13,0,0)"/><rect x="180" y="355" width="20" height="20" fill="rgb(13,0,0)"/><rect x="200" y="355" width="20" height="20" fill="rgb(46,0,0)"/><rect x="220" y="355" width="20" height="20" fill="rgb(71,0,0)"/><rect x="240" y="355" width="20" height="20" fill="rgb(46,0,0)"/><rect x="260" y="355" width="20" height="20" fill="rgb(71,0,0)"/><rect x="280" y="355" width="20" height="20" fill="rgb(102,0,0)"/><rect x="300" y="355" width="20" height="20" fill="rgb(166,0,0)"/><rect x="320" y="355" width="20" height="20" fill="rgb(194,0,0)"/><rect x="340" y="355" width="20" height="20" fill="rgb(166,0,0)"/><rect x="360" y="355" width="20" height="20" fill="rgb(166,0,0)"/><rect x="380" y="355" width="20" height="20" fill="rgb(194,0,0)"/><rect x="400" y="355" width="20" height="20" fill="rgb(194,0,0)"/><rect x="420" y="355" width="20" height="20" fill="rgb(194,0,0)"/><rect x="440" y="355" width="20" height="20" fill="rgb(166,0,0)"/><rect x="460" y="355" width="20" height="20" fill="rgb(194,0,0)"/><rect x="480" y="355" width="20" height="20" fill="rgb(194,0,0)"/><rect x="500" y="355" width="20" height="20" fill="rgb(166,0,0)"/><rect x="520" y="355" width="20" height="20" fill="rgb(166,0,0)"/><rect x="540" y="355" width="20" height="20" fill="rgb(194,0,0)"/><rect x="560" y="355" width="20" height="20" fill="rgb(166,0,0)"/><rect x="580" y="355" width="20" height="20" fill="rgb(71,0,0)"/><rect x="600" y="355" width="20" height="20" fill="rgb(13,0,0)"/><rect x="620" y="355" width="20" height="20" fill="rgb(71,0,0)"/><rect x="140" y="375" width="20" height="20" fill="rgb(13,0,0)"/><rect x="160" y="375" width="20" height="20" fill="rgb(13,0,0)"/><rect x="180" y="375" width="20" height="20" fill="rgb(13,0,0)"/><rect x="200" y="375" width="20" height="20" fill="rgb(46,0,0)"/><rect x="220" y="375" width="20" height="20" fill="rgb(46,0,0)"/><rect x="240" y="375" width="20" height="20" fill="rgb(46,0,0)"/><rect x="260" y="375" width="20" height="20" fill="rgb(71,0,0)"/><rect x="280" y="375" width="20" height="20" fill="rgb(71,0,0)"/><rect x="300" y="375" width="20" height="20" fill="rgb(166,0,0)"/><rect x="320" y="375" width="20" height="20" fill="rgb(133,0,0)"/><rect x="340" y="375" width="20" height="20" fill="rgb(71,0,0)"/><rect x="360" y="375" width="20" height="20" fill="rgb(71,0,0)"/><rect x="380" y="375" width="20" height="20" fill="rgb(71,0,0)"/><rect x="400" y="375" width="20" height="20" fill="rgb(71,0,0)"/><rect x="420" y="375" width="20" height="20" fill="rgb(71,0,0)"/><rect x="440" y="375" width="20" height="20" fill="rgb(102,0,0)"/><rect x="460" y="375" width="20" height="20" fill="rgb(102,0,0)"/><rect x="480" y="375" width="20" height="20" fill="rgb(102,0,0)"/><rect x="500" y="375" width="20" height="20" fill="rgb(102,0,0)"/><rect x="520" y="375" width="20" height="20" fill="rgb(133,0,0)"/><rect x="540" y="375" width="20" height="20" fill="rgb(194,0,0)"/><rect x="560" y="375" width="20" height="20" fill="rgb(194,0,0)"/><rect x="580" y="375" width="20" height="20" fill="rgb(194,0,0)"/><rect x="600" y="375" width="20" height="20" fill="rgb(133,0,0)"/><rect x="620" y="375" width="20" height="20" fill="rgb(71,0,0)"/><rect x="640" y="375" width="20" height="20" fill="rgb(13,0,0)"/><rect x="260" y="395" width="20" height="20" fill="rgb(71,0,0)"/><rect x="280" y="395" width="20" height="20" fill="rgb(102,0,0)"/><rect x="300" y="395" width="20" height="20" fill="rgb(71,0,0)"/><rect x="320" y="395" width="20" height="20" fill="rgb(71,0,0)"/><rect x="340" y="395" width="20" height="20" fill="rgb(46,0,0)"/><rect x="360" y="395" width="20" height="20" fill="rgb(46,0,0)"/><rect x="380" y="395" width="20" height="20" fill="rgb(13,0,0)"/><rect x="400" y="395" width="20" height="20" fill="rgb(46,0,0)"/><rect x="420" y="395" width="20" height="20" fill="rgb(71,0,0)"/><rect x="440" y="395" width="20" height="20" fill="rgb(102,0,0)"/><rect x="460" y="395" width="20" height="20" fill="rgb(102,0,0)"/><rect x="480" y="395" width="20" height="20" fill="rgb(102,0,0)"/><rect x="500" y="395" width="20" height="20" fill="rgb(102,0,0)"/><rect x="520" y="395" width="20" height="20" fill="rgb(13,0,0)"/><rect x="540" y="395" width="20" height="20" fill="rgb(166,0,0)"/><rect x="560" y="395" width="20" height="20" fill="rgb(194,0,0)"/><rect x="580" y="395" width="20" height="20" fill="rgb(194,0,0)"/><rect x="600" y="395" width="20" height="20" fill="rgb(166,0,0)"/><rect x="620" y="395" width="20" height="20" fill="rgb(13,0,0)"/><rect x="640" y="395" width="20" height="20" fill="rgb(13,0,0)"/><rect x="280" y="415" width="20" height="20" fill="rgb(71,0,0)"/><rect x="300" y="415" width="20" height="20" fill="rgb(71,0,0)"/><rect x="320" y="415" width="20" height="20" fill="rgb(46,0,0)"/><rect x="340" y="415" width="20" height="20" fill="rgb(46,0,0)"/><rect x="360" y="415" width="20" height="20" fill="rgb(46,0,0)"/><rect x="380" y="415" width="20" height="20" fill="rgb(13,0,0)"/><rect x="400" y="415" width="20" height="20" fill="rgb(13,0,0)"/><rect x="500" y="415" width="20" height="20" fill="rgb(13,0,0)"/><rect x="520" y="415" width="20" height="20" fill="rgb(102,0,0)"/><rect x="540" y="415" width="20" height="20" fill="rgb(102,0,0)"/><rect x="560" y="415" width="20" height="20" fill="rgb(166,0,0)"/><rect x="580" y="415" width="20" height="20" fill="rgb(166,0,0)"/><rect x="600" y="415" width="20" height="20" fill="rgb(133,0,0)"/><rect x="620" y="415" width="20" height="20" fill="rgb(102,0,0)"/><rect x="640" y="415" width="20" height="20" fill="rgb(13,0,0)"/><rect x="300" y="435" width="20" height="20" fill="rgb(46,0,0)"/><rect x="320" y="435" width="20" height="20" fill="rgb(46,0,0)"/><rect x="340" y="435" width="20" height="20" fill="rgb(46,0,0)"/><rect x="360" y="435" width="20" height="20" fill="rgb(46,0,0)"/><rect x="380" y="435" width="20" height="20" fill="rgb(46,0,0)"/><rect x="400" y="435" width="20" height="20" fill="rgb(13,0,0)"/><rect x="520" y="435" width="20" height="20" fill="rgb(102,0,0)"/><rect x="540" y="435" width="20" height="20" fill="rgb(71,0,0)"/><rect x="560" y="435" width="20" height="20" fill="rgb(102,0,0)"/><rect x="580" y="435" width="20" height="20" fill="rgb(102,0,0)"/><rect x="600" y="435" width="20" height="20" fill="rgb(71,0,0)"/><rect x="620" y="435" width="20" height="20" fill="rgb(102,0,0)"/><rect x="520" y="455" width="20" height="20" fill="rgb(71,0,0)"/><rect x="540" y="455" width="20" height="20" fill="rgb(102,0,0)"/><rect x="560" y="455" width="20" height="20" fill="rgb(102,0,0)"/><rect x="580" y="455" width="20" height="20" fill="rgb(102,0,0)"/><rect x="600" y="455" width="20" height="20" fill="rgb(102,0,0)"/><rect x="620" y="455" width="20" height="20" fill="rgb(71,0,0)"/>
<path d="M75,70 L80,73 L100,72 L130,73 L132,90 L165,92 L175,93 L190,95 L220,100 L240,103 L260,103 L280,99 L300,102 L306,106 L330,100 L351,109.5 L384,117 L407,122.6 L420,123.7 L445,132.4 L457.4,120.6 L477,122.4 L481,128.7 L493.5,132.4 L499.7,142.4 L523.4,151 L529.6,152.3 L532,172 L547,170 L553,167 L567,160 L584,148 L607,134 L631,130 L632,141 L638,136 L647,116 L662,103 L680,98.5 L690,101 L707,111 L708,124 L698,141 L690,153 L693,164 L687,174 L690,186 L687,206 L673,213 L653,233 L648,246 L638,258 L637,268 L645,283 L647,289 L643,303 L625,316 L617,323 L597,331 L595,351 L607,361 L613,373 L614,384 L612,389 L620,395 L623,405 L620,422 L613,435 L598,446 L583,452 L568,454 L553,447 L543,432 L543,415 L533,402 L528,390 L525,382 L493,380 L458,384 L433,385 L408,390 L388,402 L388,428 L370,432 L342,431 L320,425 L320,404 L300,369 L280,339 L260,349 L240,360 L224,352 L205,341 L198,354 L176,356 L168,345 L142,328 L112,324 L110,285 L84,281 L72,268 L65,250 L58,220 L56,200 L62,180 L75,150 L80,120 L76,90 Z" fill="rgb(0,255,0)" style="mix-blend-mode:lighten"/>
</g>
<g fill="none" stroke="#000" stroke-width="1.1" stroke-linejoin="round"><path d="M62,0 L63.6,15 L71,30 L72.3,47.3 L63.6,52.3 L65,59.8 L74.8,72.2 L79.8,82.2 L84.8,92.1 L86,104.6 L84.8,119.5 L81,139.4 L72.3,154.3 L64.9,164.3 L61.1,176.7 L55,195 L53.75,210 L57.5,227.5 L65,245 L67.5,260 L72.5,270 L74.7,277.4 L84,281 L95,300 L110,309 L111.6,322.7 L115.5,342 L121,353.7 L129,361.5 L134,369 L119.4,373 L127,379 L136.8,390.5 L150.4,404 L152.3,413.8 L147.5,416.7 L158,423.5 L165.9,433 L173.6,446.7 L183.3,442.8 L175.5,429.3 L167.8,425.4 L169.7,421.5 L164,410 L154.2,384.7 L144.6,365.4 L133,344 L133,324.7 L146.5,328.6 L152.3,332.4 L154.2,348 L162,363.4 L177.5,380.9 L177.5,388.6 L189.1,400.2 L191,410 L204.6,419.6 L214.3,431.2 L222,441 L229.8,455 L235,457.5 L242.5,475 L235,485 L237.5,495 L347.5,495 L345,465 L352.5,445 L357.5,420 L355,410 L360,390 L377.5,382.5 L402.5,370 L420,370 L440,372 L460,372.5 L470,378 L480,365 L492.5,360 L525,362.5 L545,372.5 L552.5,382.5 L557.5,397.5 L565.5,402 L572,412 L580,422 L585,425 L593,415 L594,402 L588,385 L580,365 L570,347.5 L567.5,335 L580,325 L600,312 L612,295 L628,268 L622,255 L618,240 L625,228 L640,212 L655,200 L668,190 L674,188 L668,182 L662,176 L668,165 L680,152 L690,141 L700,136 L707,131 L712,124 L705,118 L699.5,110 L694.5,100 L699.5,87 L682,81 L662,87 L649.8,97 L640,120 L637.3,124.5 L639.8,119.5 L664.7,74.7 L687,64.7 L717,57.3 L734,40 L754,27.4 L754,0 L553,0 L553,15 L533,37 L541,50 L548,70 L541,85 L536,82 L521,70 L511,62 L511,47 L506,35 L481,35 L471,32 L441,15 L441,0 Z"/><path d="M699.5,144.3 L709.5,149.3 L725,135 L739.3,124.5 L749.3,114.5 L754,104 L754,97 L746.8,94.6 L739.3,97 L745,110 L730,118 L712,126 L705,134 Z"/><path d="M709.5,109.5 L729.4,107 L724.4,114.5 L712,113 Z"/><path d="M535,469 L543,460 L563,452 L583,452 L603,450 L623,452 L645,457 L670,462 L693,470 L673,472 L650,480 L645,475 L633,467 L608,461 L588,457 L575,457 L563,455 L550,462 L538,469 Z"/><path d="M705,472 L715,467 L754,462 L754,495 L695,495 L708,482 Z"/><path d="M458,495 L458,482 L483,476 L505,477 L508,482 L500,495 Z"/><path d="M623,415 L628,414 L634,425 L636,432 L630,430 Z"/><path d="M446,133.6 L457,121 L476,122.4 L480,128.7 L493.5,132.4 L499.7,142 L488,142 L463.6,141 L448.6,137 Z"/><path d="M470,160 L476,162 L478,175 L476,195 L470,193 L467,178 Z"/><path d="M529.6,152.3 L543,154.8 L550.8,163.5 L553,167.3 L547,169.8 L539.5,172.2 L535.8,164.8 L532,172.2 L530.8,161 Z"/><path d="M506,192 L520,186 L540,180 L548,182 L530,192 L512,198 Z"/><path d="M560,178 L575,172 L585,174 L578,182 L562,184 Z"/><path d="M185,202 L189,200 L192,210 L188,214 Z"/><path d="M86,88 L107.5,87.5 L165,101 L235,112.5 L321,121 L367.5,122.5 L386,122.5 L402.5,127.5 L420,132.5 L450,132"/><path d="M530,157.5 L555,156 L582.5,151 L595,147.5 L620,140 L647,116 L653,103 L667,101 L678,99 L682,106 L690,139 L700,137"/><path d="M160,15 L155,37 L168,56 L179,75 L189,88 L194,105"/><path d="M252,15 L235,112"/><path d="M325.6,15 L322.8,120.7"/><path d="M386,121 L386,72 L411,46 L438,15"/><path d="M540,82.5 L547.5,115 L560,142.5 L580,145"/><path d="M638,15.5 L645,30 L652,39 L661.5,46.6 L680,46.6 L683,42 L748.5,25"/><path d="M85,121 L95,132.5 L147.5,137.5 L157.5,137.5"/><path d="M165,101 L155,137.5"/><path d="M172.5,102.5 L180,140 L190,162.5 L295,167.5"/><path d="M157.5,137.5 L145,165 L140,190"/><path d="M62.5,175 L107.5,185 L140,190 L217.5,195"/><path d="M296,120 L290,195"/><path d="M107.5,185 L96,221 L147.5,280"/><path d="M172.5,195 L160,260"/><path d="M160,260 L220,267.5"/><path d="M150,270 L147.5,282.5 L140,310"/><path d="M110,308.75 L145,312.5 L207.5,338.75 L225,337.5 L240,335 L262.5,350 L287.5,370 L305,390 L325,410 L345,425"/><path d="M220,267.5 L207.5,338.75"/><path d="M227.5,217.5 L220,267.5"/><path d="M207.5,195 L205,212.5 L227.5,217.5 L308.75,223.75"/><path d="M220,267.5 L291,275"/><path d="M291,275 L285,338.75"/><path d="M308.75,223.75 L305,275"/><path d="M291,275 L321,276"/><path d="M290,195 L370,202.5"/><path d="M296,160 L370,165"/><path d="M371,160 L371,195 L380,232.5 L387.5,240 L392.5,255 L393.75,320"/><path d="M305,237.5 L387.5,238.75"/><path d="M305,277.5 L392.5,277.5"/><path d="M321,276 L325,310 L370,317.5 L395,320"/><path d="M395,320 L400,330 L437.5,328.75"/><path d="M392.5,282.5 L445,283.75"/><path d="M430,150 L440,175 L430,195 L442.5,217.5 L432.5,240 L452.5,265 L460,277.5 L452.5,300 L440,320 L432.5,355"/><path d="M370,230 L432.5,230"/><path d="M372,193 L432,193.5"/><path d="M460,280 L615,267.5"/><path d="M455,300 L585,295"/><path d="M475,302.5 L477.5,357.5"/><path d="M507.5,300 L517.5,355"/><path d="M482.5,355 L520,352.5 L565,355"/><path d="M535,300 L567.5,340"/><path d="M535,300 L570,295 L602.5,320"/><path d="M472.5,207.5 L475,260"/><path d="M505,210 L507.5,255"/><path d="M460,277.5 L495,257.5 L520,245 L545,232.5"/><path d="M537.5,252.5 L555,227.5 L580,225 L610,235"/><path d="M545,205 L610,200 L625,210"/><path d="M585,200 L600,175 L640,160"/><path d="M610,160 L615,195"/><path d="M632,141 L638,190"/><path d="M618,391 L625,390 L630,394 L634,398 L633,402"/><path d="M640,405 L647,407 L651,411 L653,415"/><path d="M658,415 L664,418 L667,422"/><path d="M668,425 L673,430 L677,436"/><path d="M683,434 L689,436 L691,442"/><path d="M700,436 L708,437"/><path d="M713,442 L720,440 L728,441"/><path d="M700,452 L707,450 L705,456 L699,457"/></g>
<rect x="0" y="0" width="754" height="15" fill="#000"/>
<text x="6" y="11" font-family="Liberation Mono" font-weight="bold" font-size="13" letter-spacing="-0.8" fill="#fff" xml:space="preserve">12:00 13-JUL-2025 GMT      The Weather Company, LLC 2024-2025     www.weathercompany.com</text>
<circle cx="181" cy="7.6" r="5.3" fill="none" stroke="#fff" stroke-width="1.3"/><path d="M183.3 5.6 A2.6 2.6 0 1 0 183.3 9.6" fill="none" stroke="#fff" stroke-width="1.3"/>
<g>
<rect x="69" y="285" width="41" height="180" fill="#000"/>
<rect x="70" y="285" width="19" height="20" fill="#e600e6"/>
<rect x="70" y="305" width="19" height="20" fill="#ff8c00"/>
<rect x="70" y="325" width="19" height="20" fill="#ffff60"/>
<rect x="70" y="345" width="19" height="20" fill="#003300"/>
<rect x="70" y="365" width="19" height="20" fill="#007000"/>
<rect x="70" y="385" width="19" height="20" fill="#30f830"/>
<rect x="70" y="405" width="19" height="20" fill="#0a10ff"/>
<rect x="70" y="425" width="19" height="20" fill="#4070ff"/>
<rect x="70" y="445" width="19" height="19" fill="#80b4c0"/>
<g font-family="Liberation Mono" font-size="10" fill="#ffff30">
<text x="92" y="309">16.</text><text x="92" y="329">12.</text><text x="92" y="349">8.0</text>
<text x="92" y="369">4.0</text><text x="92" y="389">2.0</text><text x="92" y="409">1.0</text>
<text x="92" y="429">.50</text><text x="92" y="449">.25</text>
</g>
</g>
<rect x="214" y="431" width="325" height="10" fill="#000"/>
<rect x="331" y="441" width="92" height="9" fill="#000"/>
<g font-family="Liberation Mono" font-size="10" fill="#fff">
<text x="215" y="439.5" textLength="323" lengthAdjust="spacingAndGlyphs">ESTIMATED PRECIPITATION FROM: 12Z JUL 13 TO 12Z JUL 20</text>
<text x="332" y="449" textLength="90" lengthAdjust="spacingAndGlyphs">UNITS IN INCHES</text>
</g>
</svg>
<div id="note" class="abs"></div>
<div id="notetxt" class="abs">From Weather Underground</div>
</body></html>
